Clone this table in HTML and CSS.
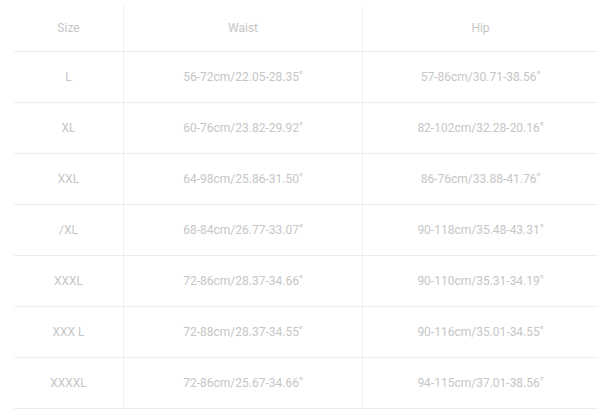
FILE: index.html
```html
<!DOCTYPE html>
<html lang="en">

<head>
    <meta charset="UTF-8">
    <meta name="viewport" content="width=device-width, initial-scale=1.0">
    <title>Size Chart</title>
    <link rel="stylesheet" href="styles.css">
</head>

<body>

    <div class="chart">
        <table class="size-table">
            <thead>
                <tr>
                    <th class="col-size">Size</th>
                    <th class="col-waist">Waist</th>
                    <th class="col-hip">Hip</th>
                </tr>
            </thead>
            <tbody>
                <tr>
                    <td>L</td>
                    <td>56-72cm/22.05-28.35"</td>
                    <td>57-86cm/30.71-38.56"</td>
                </tr>
                <tr>
                    <td>XL</td>
                    <td>60-76cm/23.82-29.92"</td>
                    <td>82-102cm/32.28-20.16"</td>
                </tr>
                <tr>
                    <td>XXL</td>
                    <td>64-98cm/25.86-31.50"</td>
                    <td>86-76cm/33.88-41.76"</td>
                </tr>
                <tr>
                    <td>/XL</td>
                    <td>68-84cm/26.77-33.07"</td>
                    <td>90-118cm/35.48-43.31"</td>
                </tr>
                <tr>
                    <td>XXXL</td>
                    <td>72-86cm/28.37-34.66"</td>
                    <td>90-110cm/35.31-34.19"</td>
                </tr>
                <tr>
                    <td>XXX L</td>
                    <td>72-88cm/28.37-34.55"</td>
                    <td>90-116cm/35.01-34.55"</td>
                </tr>
                <tr>
                    <td>XXXXL</td>
                    <td>72-86cm/25.67-34.66"</td>
                    <td>94-115cm/37.01-38.56"</td>
                </tr>
            </tbody>
        </table>
    </div>

</body>

</html>
```

FILE: styles.css
```css
body {
    margin: 0;
    background-color: #ffffff;
    font-family: Roboto, "Liberation Sans", sans-serif;
    color: #c6c6c6;
}

.chart {
    padding: 5px 4px 0 14px;
}

.size-table {
    width: 582px;
    border-collapse: collapse;
    table-layout: fixed;
}

.size-table th,
.size-table td {
    text-align: center;
    font-size: 12px;
    font-weight: normal;
    height: 50px;
    padding: 0;
    border-bottom: 1px solid #ededed;
    border-left: 1px solid #f1f1f1;
}

.size-table th {
    height: 46px;
}

.size-table th:first-child,
.size-table td:first-child {
    border-left: none;
}

.col-size {
    width: 109px;
}

.col-waist {
    width: 238px;
}

.col-hip {
    width: 235px;
}
```
